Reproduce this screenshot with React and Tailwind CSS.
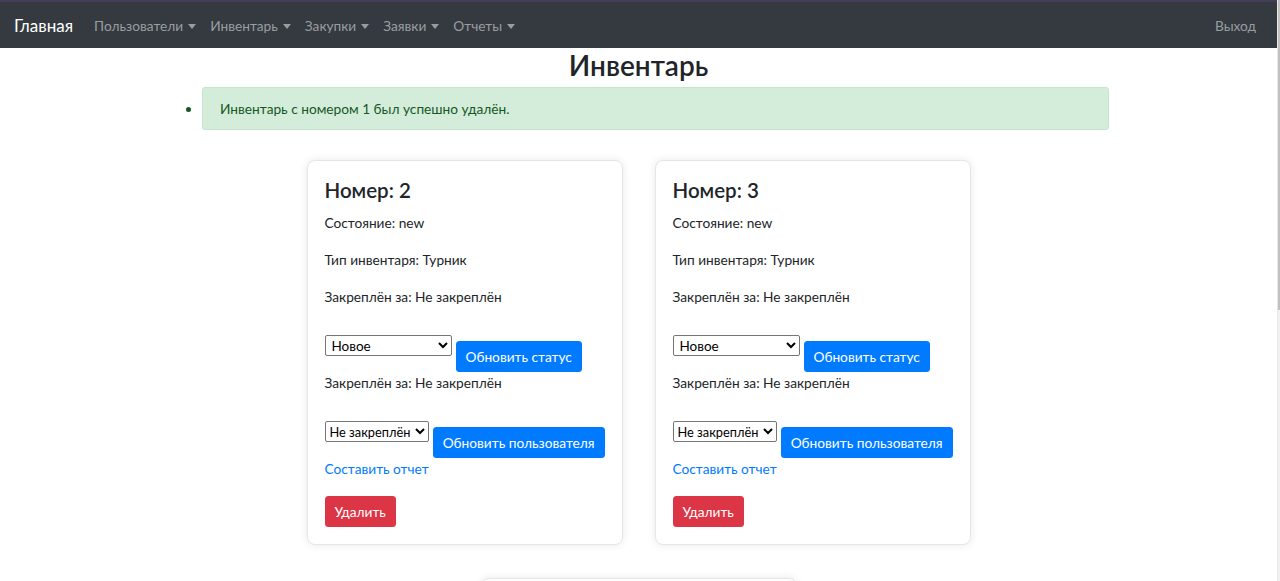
import { useState } from "react";

const NAV = ["Пользователи", "Инвентарь", "Закупки", "Заявки", "Отчеты"];

const items = [
  { id: 2, state: "new", type: "Турник", owner: "Не закреплён" },
  { id: 3, state: "new", type: "Турник", owner: "Не закреплён" },
  { id: 4, state: "new", type: "Турник", owner: "Не закреплён" },
];

const Caret = () => (
  <span className="inline-block w-0 h-0 ml-[5px] align-[2px] border-x-[4px] border-x-transparent border-t-[5px] border-t-current" />
);

const Card = ({ item }) => {
  const [status, setStatus] = useState("new");
  const [user, setUser] = useState("");

  return (
    <div className="w-[316px] mx-[16px] mb-[33px] bg-white rounded-[8px] border border-[#e6e6e6] shadow-[0_0_8px_rgba(0,0,0,0.09)] px-[17px] pt-[17px] pb-[17px]">
      <h3 className="text-[20.5px] leading-[24px] font-semibold mb-[10px]">
        Номер: {item.id}
      </h3>
      <p className="mb-[16px]">Состояние: {item.state}</p>
      <p className="mb-[16px]">Тип инвентаря: {item.type}</p>
      <p>Закреплён за: {item.owner}</p>

      <div className="flex items-start gap-[4px] mt-[28px]">
        <select
          value={status}
          onChange={(e) => setStatus(e.target.value)}
          className="w-[127px] h-[21px] border border-[#767676] rounded-[2px] bg-white text-black text-[13.5px] leading-none pl-[2px]"
        >
          <option value="new">Новое</option>
          <option value="used">Используется</option>
          <option value="broken">Сломано</option>
        </select>
        <button className="mt-[6px] h-[31px] px-[10px] rounded-[3.5px] bg-[#007bff] text-white whitespace-nowrap">
          Обновить статус
        </button>
      </div>

      <p>Закреплён за: {item.owner}</p>

      <div className="flex items-start gap-[4px] mt-[28px]">
        <select
          value={user}
          onChange={(e) => setUser(e.target.value)}
          className="w-[105px] h-[21px] border border-[#767676] rounded-[2px] bg-white text-black text-[12.8px] leading-none pl-0"
        >
          <option value="">Не закреплён</option>
        </select>
        <button className="mt-[6px] h-[31px] px-[10px] rounded-[3.5px] bg-[#007bff] text-white whitespace-nowrap">
          Обновить пользователя
        </button>
      </div>

      <a href="#" className="block w-fit text-[#007bff]">
        Составить отчет
      </a>

      <button className="mt-[17px] h-[31px] px-[10px] rounded-[3.5px] bg-[#dc3545] text-white">
        Удалить
      </button>
    </div>
  );
};

export default function App() {
  return (
    <div className="flex min-h-screen bg-white text-[#212529] text-[13.7px] leading-[21px] font-['Lato',sans-serif]">
      <main className="flex-1 min-w-0">
        <nav className="h-[48px] bg-[#343a40] border-t-2 border-[#433d57] flex items-center px-[14px]">
          <a href="#" className="text-white text-[17px] mr-[14px]">
            Главная
          </a>
          <ul className="flex items-center">
            {NAV.map((n) => (
              <li key={n}>
                <a href="#" className="px-[7px] text-[#9a9da0]">
                  {n}
                  <Caret />
                </a>
              </li>
            ))}
          </ul>
          <a href="#" className="ml-auto px-[7px] text-[#9a9da0]">
            Выход
          </a>
        </nav>

        <h2 className="text-center text-[28px] leading-[33px] font-semibold mt-[1px] mb-[5px]">
          Инвентарь
        </h2>

        <div className="w-[941px] mx-auto">
          <ul className="pl-[34px] list-disc">
            <li className="bg-[#d4edda] border border-[#c3e6cb] text-[#155724] rounded-[3px] px-[17px] py-[10px]">
              Инвентарь с номером 1 был успешно удалён.
            </li>
          </ul>

          <div className="flex flex-wrap justify-center mt-[30px]">
            {items.map((it) => (
              <Card key={it.id} item={it} />
            ))}
          </div>
        </div>
      </main>

      {/* scrollbar strip */}
      <aside className="w-[3px] bg-[#f1f1f1] border-l border-[#e8e8e8]">
        <div className="h-[310px] bg-[#c1c1c1]" />
      </aside>
    </div>
  );
}
